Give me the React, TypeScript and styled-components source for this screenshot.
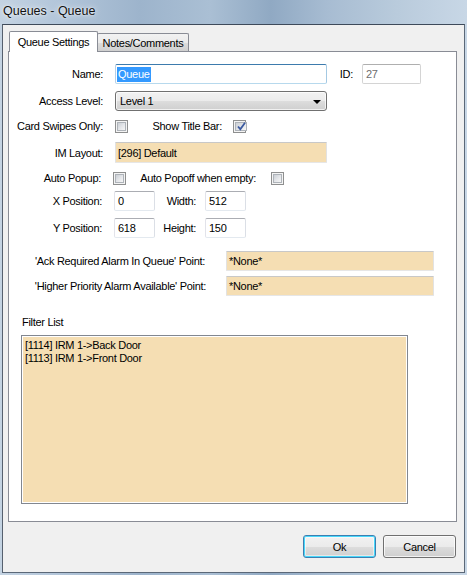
import * as React from 'react';
import styled, { createGlobalStyle, css } from 'styled-components';

const GlobalStyle = createGlobalStyle`
  html, body {
    margin: 0;
    padding: 0;
    background: #ffffff;
  }
  body {
    font-family: 'Liberation Sans', Arial, sans-serif;
    font-size: 11px;
    letter-spacing: -0.3px;
    color: #000;
  }
`;

const winBorder = '#898c95';
const wheat = '#f5deb3';

const App: React.FC = () => {
  return (
    <Window>
      <GlobalStyle />
      <TitleBar>
        <Title>Queues - Queue</Title>
      </TitleBar>
      <Client>
        <TabStrip>
          <Tab $active>Queue Settings</Tab>
          <Tab>Notes/Comments</Tab>
        </TabStrip>
        <Panel>
          <Row $h={20}>
            <Label $w={94}>Name:</Label>
            <TextBox $w={212} $ml={12} $focused>
              <Selection>Queue</Selection>
            </TextBox>
            <Label $w={26}>ID:</Label>
            <TextBox $w={59} $ml={9} $disabled>
              27
            </TextBox>
          </Row>

          <Row $h={20} $mt={7}>
            <Label $w={94}>Access Level:</Label>
            <Select $w={212} $ml={12}>
              <span>Level 1</span>
              <Arrow />
            </Select>
          </Row>

          <Row $h={16} $mt={7}>
            <Label $w={94}>Card Swipes Only:</Label>
            <CheckBox $ml={12} />
            <Label $w={94}>Show Title Bar:</Label>
            <CheckBox $ml={11} $checked />
          </Row>

          <Row $h={21} $mt={8}>
            <Label $w={94}>IM Layout:</Label>
            <ReadOnlyBox $w={212} $ml={12}>
              [296] Default
            </ReadOnlyBox>
          </Row>

          <Row $h={16} $mt={7}>
            <Label $w={92}>Auto Popup:</Label>
            <CheckBox $ml={12} />
            <Label $w={130}>Auto Popoff when empty:</Label>
            <CheckBox $ml={15} />
          </Row>

          <Row $h={20} $mt={5}>
            <Label $w={93}>X Position:</Label>
            <TextBox $w={41} $ml={12}>
              0
            </TextBox>
            <Label $w={41}>Width:</Label>
            <TextBox $w={41} $ml={9}>
              512
            </TextBox>
          </Row>

          <Row $h={20} $mt={7}>
            <Label $w={93}>Y Position:</Label>
            <TextBox $w={41} $ml={12}>
              618
            </TextBox>
            <Label $w={41}>Height:</Label>
            <TextBox $w={41} $ml={9}>
              150
            </TextBox>
          </Row>

          <Row $h={20} $mt={13}>
            <Label $w={196}>'Ack Required Alarm In Queue' Point:</Label>
            <ReadOnlyBox $w={208} $ml={21}>
              *None*
            </ReadOnlyBox>
          </Row>

          <Row $h={20} $mt={5}>
            <Label $w={197}>'Higher Priority Alarm Available' Point:</Label>
            <ReadOnlyBox $w={208} $ml={20}>
              *None*
            </ReadOnlyBox>
          </Row>

          <SectionLabel>Filter List</SectionLabel>
          <ListBox>
            <ListItem>[1114] IRM 1-&gt;Back Door</ListItem>
            <ListItem>[1113] IRM 1-&gt;Front Door</ListItem>
          </ListBox>
        </Panel>

        <ButtonRow>
          <Button $default>Ok</Button>
          <Button>Cancel</Button>
        </ButtonRow>
      </Client>
    </Window>
  );
};

export default App;

const Window = styled.div`
  width: 467px;
  height: 575px;
  box-sizing: border-box;
  display: flex;
  flex-direction: column;
  padding: 0 2px 2px 2px;
  background: linear-gradient(
    90deg,
    #c4d3e2 0%,
    #b3c6da 12%,
    #9db4cc 30%,
    #aabfd4 45%,
    #90a9c3 58%,
    #a7bcd2 70%,
    #b9cbdc 85%,
    #c8d7e6 100%
  );
`;

const TitleBar = styled.div`
  height: 24px;
  flex-shrink: 0;
  display: flex;
  align-items: center;
  padding-left: 1px;
`;

const Title = styled.span`
  font-family: 'Liberation Sans', Arial, sans-serif;
  font-size: 12.5px;
  letter-spacing: 0;
  color: #111;
  text-shadow: 0 0 6px rgba(255, 255, 255, 0.9), 0 0 2px rgba(255, 255, 255, 0.8);
  margin-top: -2px;
`;

const Client = styled.div`
  flex: 1;
  display: flex;
  flex-direction: column;
  background: #f0f0f0;
  border: 1px solid #4b5563;
  border-color: #3e4a5a #5b6878 #5b6878 #56606e;
  padding: 7px 7px 13px 5px;
  min-height: 0;
`;

const TabStrip = styled.div`
  display: flex;
  align-items: flex-end;
  height: 20px;
  padding-left: 1px;
  position: relative;
  z-index: 1;
  margin-bottom: -1px;
`;

const Tab = styled.div<{ $active?: boolean }>`
  box-sizing: border-box;
  display: flex;
  align-items: center;
  justify-content: center;
  border: 1px solid ${winBorder};
  border-radius: 2px 2px 0 0;
  white-space: nowrap;
  ${p =>
    p.$active
      ? css`
          width: 89px;
          height: 21px;
          background: #ffffff;
          border-bottom: none;
          padding-bottom: 1px;
        `
      : css`
          width: 92px;
          height: 18px;
          margin-left: -1px;
          margin-bottom: 1px;
          background: linear-gradient(#f2f2f2 0%, #ebebeb 50%, #dddddd 51%, #cfcfcf 100%);
          border-bottom: none;
          padding-top: 1px;
        `}
`;

const Panel = styled.div`
  height: 471px;
  box-sizing: border-box;
  flex-shrink: 0;
  background: #ffffff;
  border: 1px solid ${winBorder};
  padding-top: 12px;
  display: flex;
  flex-direction: column;
`;

const Row = styled.div<{ $h: number; $mt?: number }>`
  display: flex;
  align-items: center;
  height: ${p => p.$h}px;
  margin-top: ${p => p.$mt ?? 0}px;
`;

const Label = styled.span<{ $w: number }>`
  width: ${p => p.$w}px;
  flex-shrink: 0;
  text-align: right;
  white-space: nowrap;
`;

const fieldBase = css<{ $w: number; $ml?: number }>`
  box-sizing: border-box;
  width: ${p => p.$w}px;
  height: 100%;
  margin-left: ${p => p.$ml ?? 0}px;
  flex-shrink: 0;
  display: flex;
  align-items: center;
  white-space: nowrap;
  overflow: hidden;
`;

const TextBox = styled.div<{ $w: number; $ml?: number; $focused?: boolean; $disabled?: boolean }>`
  ${fieldBase};
  padding-left: 3px;
  background: #ffffff;
  border: 1px solid;
  border-radius: 2px;
  border-color: #abadb3 #dbdfe6 #e3e9ef #e2e3ea;
  ${p =>
    p.$focused &&
    css`
      padding-left: 1px;
      border-color: #3d7bad #a4c9e3 #b7d9ed #b5cfe7;
    `}
  ${p =>
    p.$disabled &&
    css`
      color: #6d6d6d;
      border-color: #afafaf #d4d4d4 #d4d4d4 #d4d4d4;
    `}
`;

const Selection = styled.span`
  background: #3399ff;
  color: #ffffff;
  padding: 1px 1px 2px 1px;
`;

const Select = styled.div<{ $w: number; $ml?: number }>`
  ${fieldBase};
  justify-content: space-between;
  padding: 0 5px 0 4px;
  border: 1px solid #707070;
  border-radius: 3px;
  background: linear-gradient(#f2f2f2 0%, #ebebeb 50%, #dddddd 51%, #cfcfcf 100%);
  box-shadow: inset 0 0 0 1px rgba(255, 255, 255, 0.7);
`;

const Arrow = styled.span`
  width: 0;
  height: 0;
  border-left: 4px solid transparent;
  border-right: 4px solid transparent;
  border-top: 4px solid #000;
  margin-top: 1px;
`;

const ReadOnlyBox = styled.div<{ $w: number; $ml?: number }>`
  ${fieldBase};
  padding-left: 2px;
  background: ${wheat};
  border: 1px solid;
  border-color: #c8c8c8 #e2e2e2 #e6e6e6 #e2e2e2;
  border-radius: 1px;
`;

const CheckBoxFrame = styled.span<{ $ml?: number }>`
  box-sizing: border-box;
  width: 13px;
  height: 13px;
  flex-shrink: 0;
  margin-left: ${p => p.$ml ?? 0}px;
  border: 1px solid #8e8f8f;
  padding: 1px;
  background: #f4f4f4;
  display: flex;
`;

const CheckBoxInner = styled.span`
  flex: 1;
  background: linear-gradient(135deg, #cbcfd5 0%, #e5e7ea 55%, #f6f6f6 100%);
  border: 1px solid #aeb3b9;
  box-sizing: border-box;
  display: flex;
  align-items: center;
  justify-content: center;
`;

const CheckBox: React.FC<{ $ml?: number; $checked?: boolean }> = ({ $ml, $checked }) => (
  <CheckBoxFrame $ml={$ml}>
    <CheckBoxInner>
      {$checked && (
        <svg width="9" height="9" viewBox="0 0 9 9" style={{ marginLeft: 1 }}>
          <path d="M1 4.5 L3.3 7.2 L8 0.8" fill="none" stroke="#3b5aa0" strokeWidth="1.8" />
        </svg>
      )}
    </CheckBoxInner>
  </CheckBoxFrame>
);

const SectionLabel = styled.div`
  margin: 20px 0 0 13px;
  height: 12px;
  line-height: 12px;
`;

const ListBox = styled.div`
  box-sizing: border-box;
  width: 387px;
  height: 169px;
  margin: 7px 0 0 12px;
  background: ${wheat};
  border: 1px solid #828790;
  box-shadow: inset 0 0 0 1px #ffffff;
  padding: 3px 0 0 3px;
`;

const ListItem = styled.div`
  height: 13px;
  line-height: 13px;
  white-space: nowrap;
`;

const ButtonRow = styled.div`
  display: flex;
  justify-content: flex-end;
  gap: 7px;
  margin-top: 13px;
  padding-right: 1px;
`;

const Button = styled.div<{ $default?: boolean }>`
  box-sizing: border-box;
  width: 73px;
  height: 23px;
  display: flex;
  align-items: center;
  justify-content: center;
  border: 1px solid #707070;
  border-radius: 3px;
  background: linear-gradient(#f2f2f2 0%, #ebebeb 50%, #dddddd 51%, #cfcfcf 100%);
  box-shadow: inset 0 0 0 1px rgba(255, 255, 255, 0.75);
  ${p =>
    p.$default &&
    css`
      border-color: #3c7fb1;
      box-shadow: inset 0 0 0 1px #48d8fb, inset 0 0 0 2px rgba(255, 255, 255, 0.5);
    `}
`;
